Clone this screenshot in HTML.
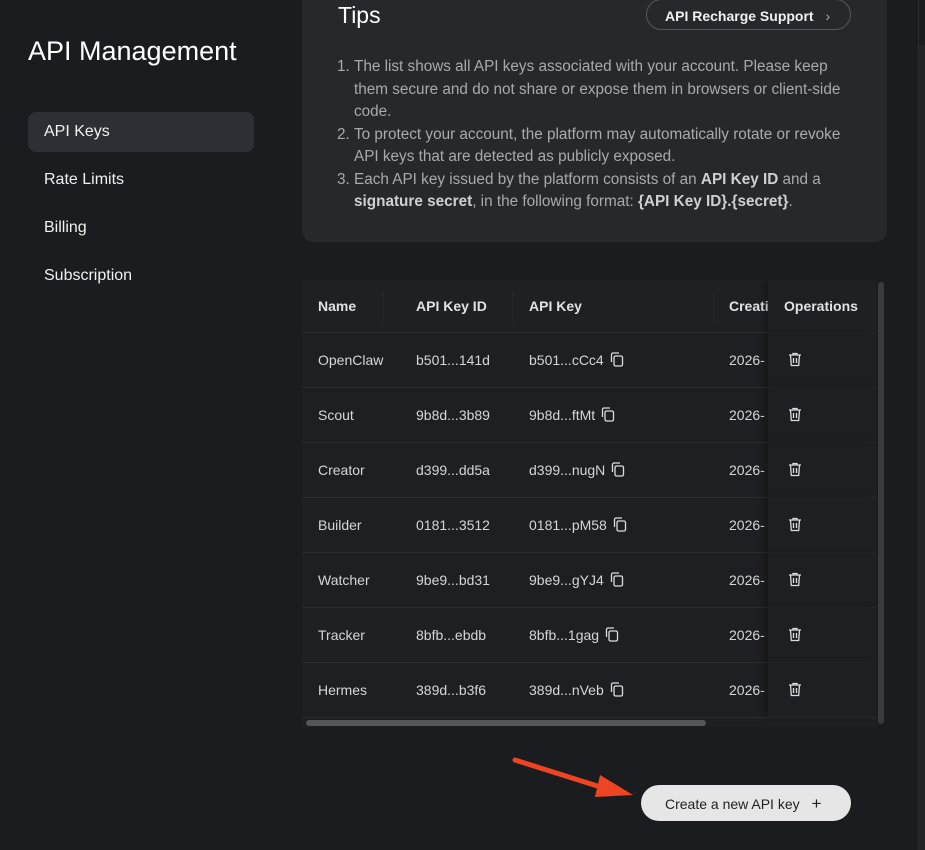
<!DOCTYPE html>
<html><head><style>
*{margin:0;padding:0;box-sizing:border-box}
body{width:925px;height:850px;background:#1b1c1f;font-family:"Liberation Sans",sans-serif;color:#e6e6e6;position:relative;overflow:hidden}
.a{position:absolute;white-space:nowrap}
.nav{left:44px;font-size:16px;color:#f0f0f0}
.tips{left:302px;top:-10px;width:585px;height:252px;background:#27282c;border-radius:12px}
ol{position:absolute;left:336px;top:56px;width:528px;font-size:15.3px;line-height:22.5px;color:#a9aaad;padding-left:18px}
ol b{color:#d0d0d2}
.tbl{left:302px;top:280px;width:574px;height:447px;background:#1e1f22;overflow:hidden}
.row{position:absolute;left:0;width:574px;height:55px;border-bottom:1px solid #2a2b2f;font-size:14px;color:#d6d6d8}
.row>span{position:absolute;top:19px}
.hd{background:#1f2023;height:53px;font-weight:bold;color:#e2e2e4}
.hd>span{top:18px}
.sep{position:absolute;top:12px;width:1px;height:30px;background:#26272a}
.ops{position:absolute;left:466px;top:0;width:108px;height:100%;box-shadow:-4px 0 6px rgba(0,0,0,.25)}
.ops>span{position:absolute}
.ic{display:inline-block;vertical-align:-2px;margin-left:6px}
</style></head><body>
<div class="a" style="left:28px;top:36px;font-size:27px;color:#fff">API Management</div>
<div class="a" style="left:28px;top:112px;width:226px;height:40px;background:#2e2f35;border-radius:8px"></div>
<div class="a nav" style="top:123px">API Keys</div>
<div class="a nav" style="top:171px">Rate Limits</div>
<div class="a nav" style="top:219px">Billing</div>
<div class="a nav" style="top:267px">Subscription</div>

<div class="a tips"></div>
<div class="a" style="left:338px;top:2px;font-size:23px;color:#fff">Tips</div>
<div class="a" style="left:646px;top:-1px;width:205px;height:31px;border:1px solid #55565b;border-radius:16px;font-size:14px;font-weight:bold;color:#f0f0f0;padding:8px 0 0 18px">API Recharge Support <span style="font-weight:normal;color:#aaa;margin-left:8px">›</span></div>
<ol>
<li>The list shows all API keys associated with your account. Please keep them secure and do not share or expose them in browsers or client-side code.</li>
<li>To protect your account, the platform may automatically rotate or revoke API keys that are detected as publicly exposed.</li>
<li>Each API key issued by the platform consists of an <b>API Key ID</b> and a <b>signature secret</b>, in the following format: <b>{API Key ID}.{secret}</b>.</li>
</ol>

<div class="a tbl">
<div class="row hd" style="top:0"><span style="left:16px">Name</span><div class="sep" style="left:81px"></div><span style="left:114px">API Key ID</span><div class="sep" style="left:210px"></div><span style="left:227px">API Key</span><div class="sep" style="left:411px"></div><span style="left:427px">Creati</span><div class="ops" style="background:#1f2023"><span style="left:16px;top:18px">Operations</span></div></div>
ROWS
</div>
<div class="a" style="left:306px;top:720px;width:400px;height:6px;background:#55565a;border-radius:3px"></div>
<div class="a" style="left:878px;top:282px;width:6px;height:442px;background:#3a3b3f;border-radius:3px"></div>
<div class="a" style="left:918px;top:0;width:1px;height:850px;background:#2c2d31"></div>
<div class="a" style="left:919px;top:45px;width:6px;height:805px;background:#232428"></div>

<svg class="a" style="left:510px;top:755px" width="125" height="45"><line x1="5" y1="5" x2="100" y2="35" stroke="#ee4422" stroke-width="5" stroke-linecap="round"/><polygon points="123,40 90,20 85,42" fill="#ee4422"/></svg>
<div class="a" style="left:641px;top:785px;width:210px;height:36px;background:#e6e6e6;border-radius:18px;color:#222;font-size:14px;padding:9px 0 0 24px">Create a new API key <span style="margin-left:8px;font-size:17px">+</span></div>
<script>
var d=[["OpenClaw","b501...141d","b501...cCc4"],["Scout","9b8d...3b89","9b8d...ftMt"],["Creator","d399...dd5a","d399...nugN"],["Builder","0181...3512","0181...pM58"],["Watcher","9be9...bd31","9be9...gYJ4"],["Tracker","8bfb...ebdb","8bfb...1gag"],["Hermes","389d...b3f6","389d...nVeb"]];
var copy='<svg class="ic" width="14" height="15" viewBox="0 0 14 15" fill="none" stroke="#ddd" stroke-width="1.3"><rect x="4" y="4" width="8.5" height="10" rx="1.5"/><path d="M1.5 10V2.5A1.5 1.5 0 0 1 3 1h6"/></svg>';
var trash='<svg width="14" height="15" viewBox="0 0 14 15" fill="none" stroke="#ddd" stroke-width="1.3"><path d="M1 3h12M5 3V1.5h4V3M2.5 3l.8 10.5h7.4L11.5 3M5.5 6v5M8.5 6v5"/></svg>';
var h='';d.forEach(function(r,i){h+='<div class="row" style="top:'+(53+i*55)+'px"><span style="left:16px">'+r[0]+'</span><span style="left:114px">'+r[1]+'</span><span style="left:227px">'+r[2]+copy+'</span><span style="left:427px">2026-</span><div class="ops" style="background:#1e1f22"><span style="left:20px;top:19px">'+trash+'</span></div></div>'});
document.body.innerHTML=document.body.innerHTML.replace('ROWS',h);
</script>
</body></html>
